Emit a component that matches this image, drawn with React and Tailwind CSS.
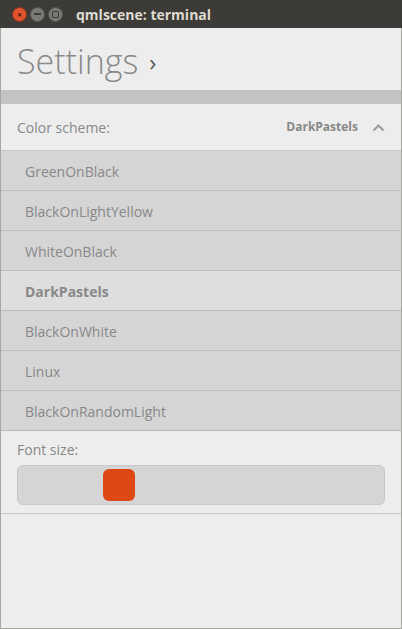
import React from "react";

const items = [
  "GreenOnBlack",
  "BlackOnLightYellow",
  "WhiteOnBlack",
  "DarkPastels",
  "BlackOnWhite",
  "Linux",
  "BlackOnRandomLight",
];

export default function App() {
  return (
    <div
      className="w-[402px] h-[629px] flex flex-col bg-[#3c3b37] overflow-hidden"
      style={{ fontFamily: '"Open Sans", "Noto Sans", sans-serif' }}
    >
      <div className="h-[28px] flex items-center rounded-t-[5px] bg-[#3c3b37] shrink-0">
        <div className="flex items-center gap-[3px] pl-[12px]">
          <div className="w-[15px] h-[15px] rounded-full bg-[#e0552e] border border-[#8a3317] flex items-center justify-center text-[9px] leading-none text-[#4a1a0a] font-bold">
            ×
          </div>
          <div className="w-[15px] h-[15px] rounded-full bg-[#7a7973] border border-[#55544f] flex items-center justify-center">
            <div className="w-[7px] h-[1.5px] bg-[#3c3b37]" />
          </div>
          <div className="w-[15px] h-[15px] rounded-full bg-[#7a7973] border border-[#55544f] flex items-center justify-center">
            <div className="w-[7px] h-[7px] border border-[#3c3b37] rounded-[1px]" />
          </div>
        </div>
        <div className="ml-[13px] text-[14px] font-bold text-[#dfdbd2]">qmlscene: terminal</div>
      </div>
      <div className="flex-1 flex flex-col bg-[#ededed] border-x border-b border-[#a8a6a0]">
        <div className="h-[62px] flex items-center pl-[16px] pt-[4px] shrink-0">
          <span className="text-[34px] font-light text-[#8a8a8a] leading-none">Settings</span>
          <span className="ml-[11px] text-[24px] text-[#555] leading-none mt-[2px]">›</span>
        </div>
        <div className="h-[14px] bg-[#c3c3c3] shrink-0" />
        <div className="h-[47px] flex items-center justify-between pl-[16px] pr-[16px] border-b border-[#c8c8c8] shrink-0">
          <span className="text-[14px] text-[#888]">Color scheme:</span>
          <div className="flex items-center">
            <span className="text-[12px] font-bold text-[#888]">DarkPastels</span>
            <svg className="ml-[14px]" width="13" height="9" viewBox="0 0 13 9">
              <path d="M1.5 7.5 L6.5 2.5 L11.5 7.5" fill="none" stroke="#999" strokeWidth="2" />
            </svg>
          </div>
        </div>
        {items.map((it) => (
          <div
            key={it}
            className={
              "h-[40px] flex items-center pl-[24px] pt-[2px] border-b border-[#bcbcbc] shrink-0 " +
              (it === "DarkPastels" ? "bg-[#dedede]" : "bg-[#d5d5d5]")
            }
          >
            <span
              className={
                "text-[14px] text-[#888] " + (it === "DarkPastels" ? "font-bold" : "")
              }
            >
              {it}
            </span>
          </div>
        ))}
        <div className="px-[16px] pt-[9px] pb-[8px] border-b border-[#c8c8c8] shrink-0">
          <div className="text-[14px] text-[#888] leading-[20px]">Font size:</div>
          <div className="mt-[5px] h-[40px] rounded-[6px] bg-[#d5d5d5] border border-[#c8c8c8] flex items-center pl-[85px]">
            <div className="w-[32px] h-[32px] rounded-[6px] bg-[#dd4814]" />
          </div>
        </div>
      </div>
    </div>
  );
}
